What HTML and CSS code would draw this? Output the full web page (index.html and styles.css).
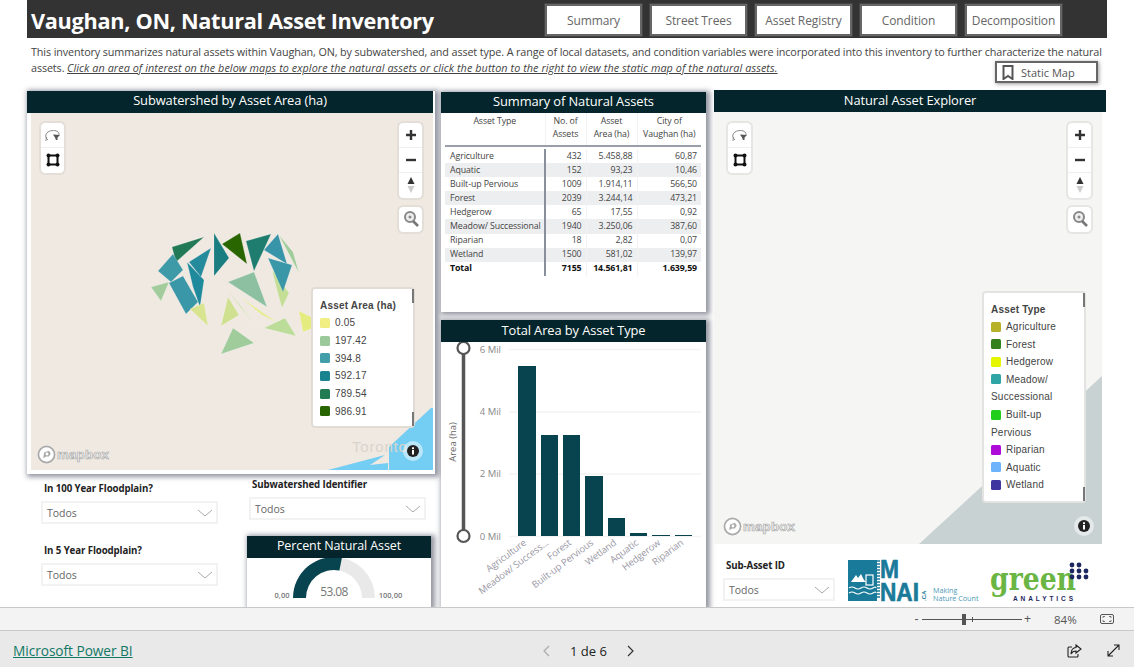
FILE: index.html
```html
<!DOCTYPE html>
<html lang="en">
<head>
<meta charset="utf-8">
<title>Vaughan, ON, Natural Asset Inventory</title>
<link rel="stylesheet" href="styles.css">
</head>
<body>
<svg class="defs" width="0" height="0" aria-hidden="true">
  <symbol id="i-lasso" viewBox="0 0 26 26"><path d="M8 18c-3-2-3-6 0-8 3-2 8-2 10 0 1 1 1 2 1 3" fill="none" stroke="#888" stroke-width="1"/><path d="M7 15c-1 1-1 3-1 4" fill="none" stroke="#888" stroke-width="1"/><path d="M13 12.500l7 .500-2.500 2.500 0 2.500-1.500 0-1-2.500z" fill="#555"/></symbol>
  <symbol id="i-box" viewBox="0 0 26 26"><path d="M8.500 8.500h9v9h-9z" fill="none" stroke="#111" stroke-width="2"/><circle cx="8.500" cy="8.500" r="2" fill="#111"/><circle cx="17.500" cy="8.500" r="2" fill="#111"/><circle cx="8.500" cy="17.500" r="2" fill="#111"/><circle cx="17.500" cy="17.500" r="2" fill="#111"/></symbol>
  <symbol id="i-plus" viewBox="0 0 26 26"><path d="M13 8v10M8 13h10" stroke="#333" stroke-width="2.400"/></symbol>
  <symbol id="i-minus" viewBox="0 0 26 26"><path d="M8 13h10" stroke="#333" stroke-width="2.400"/></symbol>
  <symbol id="i-compass" viewBox="0 0 26 26"><path d="M13 5l3.500 7h-7z" fill="#333"/><path d="M13 21l3.500-7h-7z" fill="#ccc"/></symbol>
  <symbol id="i-find" viewBox="0 0 26 26"><circle cx="12" cy="11" r="5" fill="#eee" stroke="#888" stroke-width="2"/><circle cx="12" cy="11" r="1.500" fill="#888"/><path d="M15 15l5 5" stroke="#777" stroke-width="2.600"/></symbol>
  <symbol id="i-info" viewBox="0 0 20 20"><circle cx="10" cy="10" r="10" fill="#fff" fill-opacity=".5"/><circle cx="10" cy="10" r="6" fill="#222"/><rect x="9" y="9" width="2" height="4.500" fill="#fff"/><rect x="9" y="6.300" width="2" height="1.800" fill="#fff"/></symbol>
  <symbol id="i-chev" viewBox="0 0 16 8"><path d="M1 1l7 6 7-6" fill="none" stroke="#aaa" stroke-width="1"/></symbol>
  <symbol id="i-mapbox" viewBox="0 0 20 20"><circle cx="10" cy="10" r="8.500" fill="#fff" stroke="#aaa" stroke-width="1.800"/><path d="M6.500 14l1-6 5-2 2 3-2 3-3 0z" fill="#aaa"/><circle cx="10.500" cy="9.500" r="1.500" fill="#fff"/></symbol>
</svg>

<div class="app">
  <main class="canvas">
    <header class="topbar">
      <h1 class="title">Vaughan, ON, Natural Asset Inventory</h1>
      <nav class="tabs">
        <a class="tab">Summary</a>
        <a class="tab">Street Trees</a>
        <a class="tab">Asset Registry</a>
        <a class="tab">Condition</a>
        <a class="tab">Decomposition</a>
      </nav>
    </header>

    <section class="intro">
      <p class="intro-text">This inventory summarizes natural assets within Vaughan, ON, by subwatershed, and asset type. A range of local datasets, and condition variables were incorporated into this inventory to further characterize the natural<br>assets. <em>Click an area of interest on the below maps to explore the natural assets or click the button to the right to view the static map of the natural assets.</em></p>
      <a class="static-btn">
        <svg width="12" height="15" viewBox="0 0 12 15"><path d="M1.500 1h9v13l-4.500-3-4.500 3z" fill="none" stroke="#555" stroke-width="2"/></svg>
        Static Map
      </a>
    </section>

    <div class="columns">
      <div class="col col-left">
        <section class="card map-card">
          <h2 class="card-title">Subwatershed by Asset Area (ha)</h2>
          <div class="map map-beige">
            <svg class="map-art" viewBox="31 113 402 357" width="402" height="357">
              <polygon points="389,470 389,447 431,408 433,408 433,470" fill="#74cdf2"/>
              <polygon points="328,470 385,455 370,465 388,463 388,470" fill="#74cdf2"/>
              <text x="352" y="452" class="city">Toronto</text>
              <g stroke="#fff" stroke-opacity=".25" stroke-width=".7">
                <polygon points="172,247 204,237 176,262" fill="#217a55"/>
                <polygon points="158,271 173,254 183,270 171,282" fill="#3f9aa8"/>
                <polygon points="169,283 183,276 198,302 186,314" fill="#3a97a8"/>
                <polygon points="189,262 211,248 201,277" fill="#248a9c"/>
                <polygon points="187,262 204,280 200,307 193,287" fill="#1f8a9c"/>
                <polygon points="214,233 229,258 214,276" fill="#1a7d80"/>
                <polygon points="222,244 240,233 247,264" fill="#2a6600"/>
                <polygon points="246,241 271,234 254,271" fill="#1f7d70"/>
                <polygon points="279,235 293,252 299,273" fill="#a0cc99"/>
                <polygon points="272,270 289,293 282,308 277,290" fill="#c5de96"/>
                <polygon points="264,250 278,234 287,264" fill="#3894a8"/>
                <polygon points="268,258 292,265 283,292" fill="#3a97a8"/>
                <polygon points="151,287 169,282 161,301" fill="#a2cc9c"/>
                <polygon points="228,282 254,272 267,307" fill="#8cc0a0"/>
                <polygon points="224,286 257,328 240,305" fill="#c4de9a"/>
                <polygon points="240,297 278,323 262,315" fill="#e4ec8e"/>
                <polygon points="228,297 239,315 221,326" fill="#cfe090"/>
                <polygon points="190,309 204,303 208,326" fill="#d8e490"/>
                <polygon points="264,328 285,318 296,336" fill="#bcdc9a"/>
                <polygon points="299,311 313,318 313,328 303,332" fill="#e4ec80"/>
                <polygon points="233,328 254,343 221,354" fill="#a0cc9c"/>
              </g>
            </svg>
            <div class="ctrl ctrl-left">
              <button class="ctrl-btn"><svg width="26" height="26"><use href="#i-lasso"/></svg></button>
              <button class="ctrl-btn"><svg width="26" height="26"><use href="#i-box"/></svg></button>
            </div>
            <div class="ctrl-right">
              <div class="ctrl">
                <button class="ctrl-btn"><svg width="26" height="26"><use href="#i-plus"/></svg></button>
                <button class="ctrl-btn"><svg width="26" height="26"><use href="#i-minus"/></svg></button>
                <button class="ctrl-btn"><svg width="26" height="26"><use href="#i-compass"/></svg></button>
              </div>
              <div class="ctrl">
                <button class="ctrl-btn"><svg width="26" height="26"><use href="#i-find"/></svg></button>
              </div>
            </div>
            <div class="legend legend-area">
              <div class="legend-title">Asset Area (ha)</div>
              <div class="legend-row"><i class="sw sw-a1"></i>0.05</div>
              <div class="legend-row"><i class="sw sw-a2"></i>197.42</div>
              <div class="legend-row"><i class="sw sw-a3"></i>394.8</div>
              <div class="legend-row"><i class="sw sw-a4"></i>592.17</div>
              <div class="legend-row"><i class="sw sw-a5"></i>789.54</div>
              <div class="legend-row"><i class="sw sw-a6"></i>986.91</div>
            </div>
            <div class="mapbox"><svg width="19" height="19"><use href="#i-mapbox"/></svg><span>mapbox</span></div>
            <svg class="map-info" width="20" height="20"><use href="#i-info"/></svg>
          </div>
        </section>

        <div class="below-map">
          <div class="filters-a">
            <div class="filter">
              <label class="filter-label">In 100 Year Floodplain?</label>
              <div class="select">Todos<svg width="16" height="8"><use href="#i-chev"/></svg></div>
            </div>
            <div class="filter">
              <label class="filter-label">In 5 Year Floodplain?</label>
              <div class="select">Todos<svg width="16" height="8"><use href="#i-chev"/></svg></div>
            </div>
          </div>
          <div class="filters-b">
            <div class="filter">
              <label class="filter-label">Subwatershed Identifier</label>
              <div class="select">Todos<svg width="16" height="8"><use href="#i-chev"/></svg></div>
            </div>
            <section class="card gauge-card">
              <h2 class="card-title">Percent Natural Asset</h2>
              <svg class="gauge" width="184" height="49" viewBox="0 0 184 49">
                <path d="M46 40a41 41 0 0 1 82 0h-13a28 28 0 0 0-56 0z" fill="#e9e9e9"/>
                <path d="M46 40a41 41 0 0 1 48.900-40.200l-2.500 12.700a28 28 0 0 0-33.400 27.500z" fill="#07444f"/>
                <text x="87" y="38" class="gauge-val" text-anchor="middle">53.08</text>
                <text x="35" y="40" class="gauge-end" text-anchor="middle">0,00</text>
                <text x="143.500" y="40" class="gauge-end" text-anchor="middle">100,00</text>
              </svg>
            </section>
          </div>
        </div>
      </div>

      <div class="col col-mid">
        <section class="card table-card">
          <h2 class="card-title">Summary of Natural Assets</h2>
          <table class="summary">
            <thead>
              <tr><th>Asset Type</th><th>No. of<br>Assets</th><th>Asset<br>Area (ha)</th><th>City of<br>Vaughan (ha)</th></tr>
            </thead>
            <tbody>
              <tr><td>Agriculture</td><td>432</td><td>5.458,88</td><td>60,87</td></tr>
              <tr><td>Aquatic</td><td>152</td><td>93,23</td><td>10,46</td></tr>
              <tr><td>Built-up Pervious</td><td>1009</td><td>1.914,11</td><td>566,50</td></tr>
              <tr><td>Forest</td><td>2039</td><td>3.244,14</td><td>473,21</td></tr>
              <tr><td>Hedgerow</td><td>65</td><td>17,55</td><td>0,92</td></tr>
              <tr><td>Meadow/ Successional</td><td>1940</td><td>3.250,06</td><td>387,60</td></tr>
              <tr><td>Riparian</td><td>18</td><td>2,82</td><td>0,07</td></tr>
              <tr><td>Wetland</td><td>1500</td><td>581,02</td><td>139,97</td></tr>
              <tr class="total"><td>Total</td><td>7155</td><td>14.561,81</td><td>1.639,59</td></tr>
            </tbody>
          </table>
        </section>

        <section class="card chart-card">
          <h2 class="card-title">Total Area by Asset Type</h2>
          <svg class="chart" width="265" height="265" viewBox="441 342 265 265">
            <g class="grid">
              <path d="M509 349.500H701M509 412H701M509 474H701M509 536.500H701"/>
            </g>
            <g class="y-labels" text-anchor="end">
              <text x="501" y="353">6 Mil</text>
              <text x="501" y="415">4 Mil</text>
              <text x="501" y="477">2 Mil</text>
              <text x="501" y="540">0 Mil</text>
            </g>
            <text class="y-title" transform="translate(456 442) rotate(-90)" text-anchor="middle">Area (ha)</text>
            <path d="M463.500 348V536" stroke="#555" stroke-width="3.500"/>
            <circle cx="463.500" cy="348" r="6" fill="#fff" stroke="#555" stroke-width="2.200"/>
            <circle cx="463.500" cy="536" r="6" fill="#fff" stroke="#555" stroke-width="2.200"/>
            <g fill="#07444f">
              <rect x="518" y="366" width="18" height="170"/>
              <rect x="541" y="435" width="17" height="101"/>
              <rect x="563" y="435" width="17" height="101"/>
              <rect x="585" y="476" width="18" height="60"/>
              <rect x="608" y="518" width="17" height="18"/>
              <rect x="630" y="533" width="17" height="3"/>
              <rect x="652" y="535" width="18" height="1"/>
              <rect x="675" y="535" width="17" height="1"/>
            </g>
            <g class="x-labels" text-anchor="end">
              <text transform="translate(527 544) rotate(-37)">Agriculture</text>
              <text transform="translate(549 544) rotate(-37)">Meadow/ Success...</text>
              <text transform="translate(572 544) rotate(-37)">Forest</text>
              <text transform="translate(594 544) rotate(-37)">Built-up Pervious</text>
              <text transform="translate(617 544) rotate(-37)">Wetland</text>
              <text transform="translate(639 544) rotate(-37)">Aquatic</text>
              <text transform="translate(661 544) rotate(-37)">Hedgerow</text>
              <text transform="translate(684 544) rotate(-37)">Riparian</text>
            </g>
          </svg>
        </section>
      </div>

      <div class="col col-right">
        <section class="explorer">
          <h2 class="card-title explorer-title">Natural Asset Explorer</h2>
          <div class="map map-grey">
            <svg class="map-art" viewBox="714 112 388 432" width="388" height="432">
              <polygon points="1102,376 919,544 1102,544" fill="#c9d2d3"/>
            </svg>
            <div class="ctrl ctrl-left">
              <button class="ctrl-btn"><svg width="26" height="26"><use href="#i-lasso"/></svg></button>
              <button class="ctrl-btn"><svg width="26" height="26"><use href="#i-box"/></svg></button>
            </div>
            <div class="ctrl-right">
              <div class="ctrl">
                <button class="ctrl-btn"><svg width="26" height="26"><use href="#i-plus"/></svg></button>
                <button class="ctrl-btn"><svg width="26" height="26"><use href="#i-minus"/></svg></button>
                <button class="ctrl-btn"><svg width="26" height="26"><use href="#i-compass"/></svg></button>
              </div>
              <div class="ctrl">
                <button class="ctrl-btn"><svg width="26" height="26"><use href="#i-find"/></svg></button>
              </div>
            </div>
            <div class="legend legend-type">
              <div class="legend-title">Asset Type</div>
              <div class="legend-row"><i class="sw sw-t1"></i>Agriculture</div>
              <div class="legend-row"><i class="sw sw-t2"></i>Forest</div>
              <div class="legend-row"><i class="sw sw-t3"></i>Hedgerow</div>
              <div class="legend-row"><i class="sw sw-t4"></i>Meadow/</div>
              <div class="legend-row">Successional</div>
              <div class="legend-row"><i class="sw sw-t5"></i>Built-up</div>
              <div class="legend-row">Pervious</div>
              <div class="legend-row"><i class="sw sw-t6"></i>Riparian</div>
              <div class="legend-row"><i class="sw sw-t7"></i>Aquatic</div>
              <div class="legend-row"><i class="sw sw-t8"></i>Wetland</div>
            </div>
            <div class="mapbox"><svg width="19" height="19"><use href="#i-mapbox"/></svg><span>mapbox</span></div>
            <svg class="map-info" width="20" height="20"><use href="#i-info"/></svg>
          </div>
        </section>
        <div class="logos-row">
          <div class="filter filter-sub">
            <label class="filter-label">Sub-Asset ID</label>
            <div class="select select-sub">Todos<svg width="16" height="8"><use href="#i-chev"/></svg></div>
          </div>
          <svg class="logos" width="245" height="50" viewBox="848 555 245 50">
            <rect x="848" y="560" width="29" height="41" fill="#1a7a99"/>
            <path d="M877 561h3M877 564h3M877 567h3M877 570h3M877 573h3M877 576h3M877 579h3M877 582h3M877 585h3M877 588h3M877 591h3M877 594h3M877 597h3" stroke="#1a7a99" stroke-width="1.500"/>
            <path d="M851 582l5-7 2 3 3-4 3 6 2 2h-15z" fill="#fff"/>
            <rect x="866" y="575" width="7" height="10" fill="none" stroke="#fff" stroke-width="1.200"/>
            <path d="M849 588q3-2 6 0t6 0 6 0 6 0 3 0M849 593q3-2 6 0t6 0 6 0 6 0 3 0" fill="none" stroke="#fff" stroke-width="1.200"/>
            <text x="880" y="578" class="mnai" textLength="19" lengthAdjust="spacingAndGlyphs">M</text>
            <text x="880" y="601" class="mnai" textLength="39" lengthAdjust="spacingAndGlyphs">NAI</text>
            <text transform="translate(926 601) rotate(-90)" class="mnai-ca">.CA</text>
            <text x="933" y="593" class="mnai-sub">Making</text>
            <text x="933" y="601" class="mnai-sub">Nature Count</text>
            <text x="990" y="590" class="green" textLength="86" lengthAdjust="spacingAndGlyphs">green</text>
            <text x="1013" y="601" class="analytics" textLength="60">ANALYTICS</text>
            <g fill="#1c2660">
              <circle cx="1072" cy="565" r="2.400"/><circle cx="1079" cy="565" r="2.400"/>
              <circle cx="1072" cy="571" r="2.400"/><circle cx="1079" cy="571" r="2.400"/><circle cx="1086" cy="571" r="2.400"/>
              <circle cx="1072" cy="577" r="2.400"/><circle cx="1079" cy="577" r="2.400"/><circle cx="1086" cy="577" r="2.400"/>
            </g>
          </svg>
        </div>
      </div>
    </div>
  </main>

  <div class="zoombar">
    <span class="zoom-sign">-</span>
    <div class="zoom-track"><i class="zoom-thumb"></i><i class="zoom-tick"></i></div>
    <span class="zoom-sign">+</span>
    <span class="zoom-pct">84%</span>
    <svg width="14" height="10" viewBox="0 0 14 10"><rect x=".5" y=".5" width="13" height="9" rx="1.500" fill="none" stroke="#555"/><path d="M3 4V2.500h2M11 4V2.500H9M3 6v1.500h2M11 6v1.500H9" fill="none" stroke="#555" stroke-width=".8"/></svg>
  </div>

  <footer class="footer">
    <a class="pbi-link">Microsoft Power BI</a>
    <div class="pager">
      <svg width="8" height="12" viewBox="0 0 8 12"><path d="M7 1L2 6l5 5" fill="none" stroke="#aaa" stroke-width="1.200"/></svg>
      <span class="page-num">1 de 6</span>
      <svg width="8" height="12" viewBox="0 0 8 12"><path d="M1 1l5 5-5 5" fill="none" stroke="#333" stroke-width="1.200"/></svg>
    </div>
    <div class="footer-icons">
      <svg width="15" height="14" viewBox="0 0 15 14"><path d="M5 3H2a1 1 0 0 0-1 1v8a1 1 0 0 0 1 1h8a1 1 0 0 0 1-1v-2" fill="none" stroke="#222" stroke-width="1.100"/><path d="M9 1l5 4-5 4V7C6.500 7 5 8 4 10c0-4 2-6.500 5-6.500z" fill="none" stroke="#222" stroke-width="1.100"/></svg>
      <svg width="13" height="13" viewBox="0 0 13 13"><path d="M1 12L12 1M7 1h5v5M1 7v5h5" fill="none" stroke="#222" stroke-width="1.100"/></svg>
    </div>
  </footer>
</div>
</body>
</html>
```

FILE: styles.css
```css
* { box-sizing: border-box; }
html, body { margin: 0; padding: 0; }
body { width: 1134px; height: 667px; overflow: hidden; background: #fff; font-family: "Open Sans", "Noto Sans", sans-serif; color: #333; }
.defs { position: absolute; }
.app { display: flex; flex-direction: column; height: 667px; }

.canvas { height: 607px; padding-left: 27px; padding-right: 27px; overflow: hidden; flex: none; }

.topbar { height: 38px; background: #333; display: flex; justify-content: space-between; align-items: flex-start; padding-left: 4px; padding-right: 45px; }
.title { margin: 6px 0 0; font-size: 21.700px; line-height: 30px; font-weight: 700; color: #fff; white-space: nowrap; letter-spacing: -.3px; }
.tabs { display: flex; gap: 8px; padding-top: 4px; }
.tab { width: 97px; height: 32px; background: #fff; border: 2px solid #666; outline: 1px solid #444; color: #666; font-size: 12px; display: flex; align-items: center; justify-content: center; letter-spacing: -.1px; }

.intro { height: 53px; position: relative; }
.intro-text { margin: 0; padding: 6px 0 0 4px; font-size: 10.800px; line-height: 16px; color: #444; white-space: nowrap; letter-spacing: -.12px; }
.intro-text em { text-decoration: underline; letter-spacing: .08px; }
.static-btn { position: absolute; top: 23px; right: 9px; width: 103px; height: 22px; background: #fff; border: 2px solid #666; box-shadow: 1px 1px 4px rgba(0,0,0,.4); display: flex; align-items: center; gap: 7px; padding-left: 5px; font-size: 11px; color: #555; }

.columns { display: grid; grid-template-columns: 408px 265px 392px; column-gap: 6px; }
.col { min-width: 0; display: flex; flex-direction: column; }
.col-mid { margin-top: 1px; }
.col-right { margin-left: 2px; margin-top: -1px; width: 392px; }

.card { background: #fff; box-shadow: 2px 1px 5px 2px rgba(60,65,85,.55); }
.card-title { margin: 0; height: 22px; background: #04252b; color: #fff; font-size: 12.900px; line-height: 20px; font-weight: 400; text-align: center; white-space: nowrap; letter-spacing: -.1px; }
.gauge-card .card-title { font-size: 12.500px; }
.map-card .card-title { line-height: 19px; }
.table-card .card-title { line-height: 19px; }

.map-card { padding: 0 2px 4px 0; height: 383px; }
.map-card .map { margin-left: 4px; }
.map { position: relative; overflow: hidden; }
.map-beige { width: 402px; height: 357px; background: #efe9e2; }
.map-grey { width: 388px; height: 432px; background: #f5f5f3; }
.map-art { display: block; }
.city { font-size: 15px; fill: #d9d4cc; font-family: "Liberation Sans", sans-serif; letter-spacing: .8px; }

.ctrl { width: 25px; background: #fff; border: 1px solid #e3ded7; box-shadow: 0 0 0 1px #e3ded7; border-radius: 5px; display: flex; flex-direction: column; }
.map-grey .ctrl { border-color: #e6e6e4; box-shadow: 0 0 0 1px #e6e6e4; }
.ctrl-btn { display: block; width: 23px; height: 25px; padding: 0; border: 0; background: transparent; border-bottom: 1px solid #eee; }
.ctrl-btn:last-child { border-bottom: 0; }
.ctrl-btn svg { display: block; margin-left: -1.500px; margin-top: -1.500px; }
.ctrl-left { position: absolute; left: 9px; top: 9px; }
.ctrl-right { position: absolute; right: 10px; top: 9px; display: flex; flex-direction: column; gap: 7px; }
.map-grey .ctrl-left { left: 13px; top: 10px; }
.map-grey .ctrl-right { top: 10px; }

.legend { position: absolute; background: #fff; border: 2px solid #e0dcd5; border-radius: 4px; padding: 9px 0 0 7px; font-family: "Liberation Sans", sans-serif; font-size: 10px; color: #444; }
.legend::before, .legend::after { content: ""; position: absolute; right: -1px; width: 2px; height: 14px; background: #777; }
.legend::before { top: 0; }
.legend::after { bottom: 0; }
.legend-title { font-weight: 700; height: 16px; line-height: 16px; letter-spacing: .2px; }
.legend-row { height: 17.700px; display: flex; align-items: center; gap: 5px; letter-spacing: .2px; }
.sw { width: 10px; height: 10px; border-radius: 1.500px; flex: none; }
.legend-area { left: 280px; top: 174px; width: 104px; height: 141px; }
.legend-type { left: 268px; top: 179px; width: 104px; height: 212px; border-color: #e3e3e1; }
.legend-type .legend-row { height: 17.550px; }
.sw-a1 { background: #f1ee84; }
.sw-a2 { background: #9cc99b; }
.sw-a3 { background: #429ea9; }
.sw-a4 { background: #19848f; }
.sw-a5 { background: #227b52; }
.sw-a6 { background: #276500; }
.sw-t1 { background: #b7b12a; }
.sw-t2 { background: #33801d; }
.sw-t3 { background: #e5f700; }
.sw-t4 { background: #2fa6a5; }
.sw-t5 { background: #21ce1c; }
.sw-t6 { background: #ae0ad8; }
.sw-t7 { background: #6cb3fb; }
.sw-t8 { background: #3f35a0; }

.mapbox { position: absolute; left: 6px; bottom: 6px; display: flex; align-items: center; gap: 1px; font: 700 13.300px "Liberation Sans", sans-serif; color: #f4f4f4; -webkit-text-stroke: .7px #aaa; letter-spacing: .2px; }
.map-grey .mapbox { left: 9px; bottom: 8px; }
.map-info { position: absolute; right: 10px; bottom: 9px; }
.map-grey .map-info { right: 8px; bottom: 8px; }

.below-map { display: grid; grid-template-columns: 220px 184px; height: 140px; }
.filters-a { padding: 8px 0 0 14px; display: flex; flex-direction: column; gap: 20px; }
.filters-b { padding-top: 4px; display: flex; flex-direction: column; gap: 16px; }
.filters-b .filter { margin-left: 2px; }
.filter { width: 177px; display: flex; flex-direction: column; flex: none; }
.filter-label { font-size: 9.700px; font-weight: 700; color: #222; line-height: 13px; margin-bottom: 6px; padding-left: 3px; white-space: nowrap; letter-spacing: -.1px; }
.select { height: 23px; border: 2px solid #f2f2f2; display: flex; align-items: center; justify-content: space-between; padding: 0 3px 0 4px; font-size: 10.500px; color: #666; flex: none; }
.gauge-card { width: 184px; height: 71px; flex: none; }
.gauge { display: block; }
.gauge-val { font: 400 12px "Open Sans", sans-serif; fill: #777; letter-spacing: -.6px; }
.gauge-end { font: 600 7.500px "Open Sans", sans-serif; fill: #777; }

.table-card { height: 220px; padding-left: 4px; }
.table-card .card-title { margin-left: -4px; height: 21px; }
.summary { border-collapse: collapse; table-layout: fixed; width: 256px; font-size: 8.800px; line-height: 13px; color: #444; }
.summary th { font-weight: 400; height: 33px; vertical-align: top; padding: 2px 0 0; text-align: center; border-bottom: 2px solid #9a9ea8; border-left: 1px solid #f2f2f2; letter-spacing: -.12px; white-space: nowrap; }
.summary th:nth-child(1) { width: 100px; border-left: 0; }
.summary th:nth-child(2) { width: 41px; }
.summary th:nth-child(3) { width: 51px; }
.summary th:nth-child(4) { width: 64px; }
.summary tbody::before { content: ""; display: table-row; height: 3px; }
.summary td { height: 14.100px; padding: 0 4px 0 0; text-align: right; white-space: nowrap; border-left: 1px solid #f2f2f2; letter-spacing: -.1px; }
.summary td:first-child { text-align: left; padding: 0 0 0 5px; border-left: 0; border-right: 2px solid #8a8f9c; }
.summary tbody tr:nth-child(even) { background: #edeef0; }
.summary .total td { font-weight: 700; color: #111; }

.chart-card { margin-top: 8px; height: 287px; }
.chart { display: block; }
.grid path { stroke: #f3f3f3; stroke-width: 1.500; fill: none; }
.y-labels text { font-size: 9.500px; fill: #888; }
.y-title { font-size: 9.500px; fill: #666; }
.x-labels text { font-size: 9.500px; fill: #9a98a5; letter-spacing: -.1px; }

.explorer { background: #fff; }
.explorer-title { width: 392px; }

.logos-row { display: flex; align-items: flex-start; }
.filter-sub { width: 121px; padding: 15px 0 0 9px; }
.select-sub { width: 112px; }
.logos { display: block; margin: 11px 0 0 13px; flex: none; }
.mnai { font: 700 25px "Liberation Sans", sans-serif; fill: #1a7a99; stroke: #1a7a99; stroke-width: .6px; }
.mnai-ca { font: 700 6px "Liberation Sans", sans-serif; fill: #1a7a99; }
.mnai-sub { font: 400 7.200px "Open Sans", sans-serif; fill: #4a9ab5; }
.green { font: 700 31px "DejaVu Serif", serif; fill: #6ab543; }
.analytics { font: 700 6.500px "Liberation Sans", sans-serif; fill: #1c2660; }

.zoombar { height: 24px; background: #f3f3f3; border-top: 1px solid #c8c8c8; border-bottom: 1px solid #c8c8c8; display: flex; align-items: center; flex: none; padding-left: 912px; font-size: 11px; color: #555; }
.zoom-sign { width: 9px; text-align: center; font-size: 12px; font-family: "Liberation Sans", sans-serif; }
.zoom-track { width: 100px; height: 1px; background: #555; margin: 0 1px; position: relative; }
.zoom-thumb { position: absolute; left: 40px; top: -5px; width: 4px; height: 11px; background: #555; }
.zoom-tick { position: absolute; left: 50px; top: -2px; width: 1px; height: 5px; background: #555; }
.zoom-pct { margin-left: 22px; width: 41px; font-size: 11.500px; }
.zoom-pct + svg { margin-left: 5px; }

.footer { flex: 1; background: #e9e9e9; display: flex; align-items: center; padding: 3px 0 0 13px; }
.pbi-link { width: 529px; font-size: 13.700px; color: #117865; text-decoration: underline; white-space: nowrap; letter-spacing: -.05px; }
.pager { display: flex; align-items: center; gap: 20px; font-size: 13px; color: #222; }
.footer-icons { margin-left: 432px; display: flex; gap: 25px; align-items: center; }
```
